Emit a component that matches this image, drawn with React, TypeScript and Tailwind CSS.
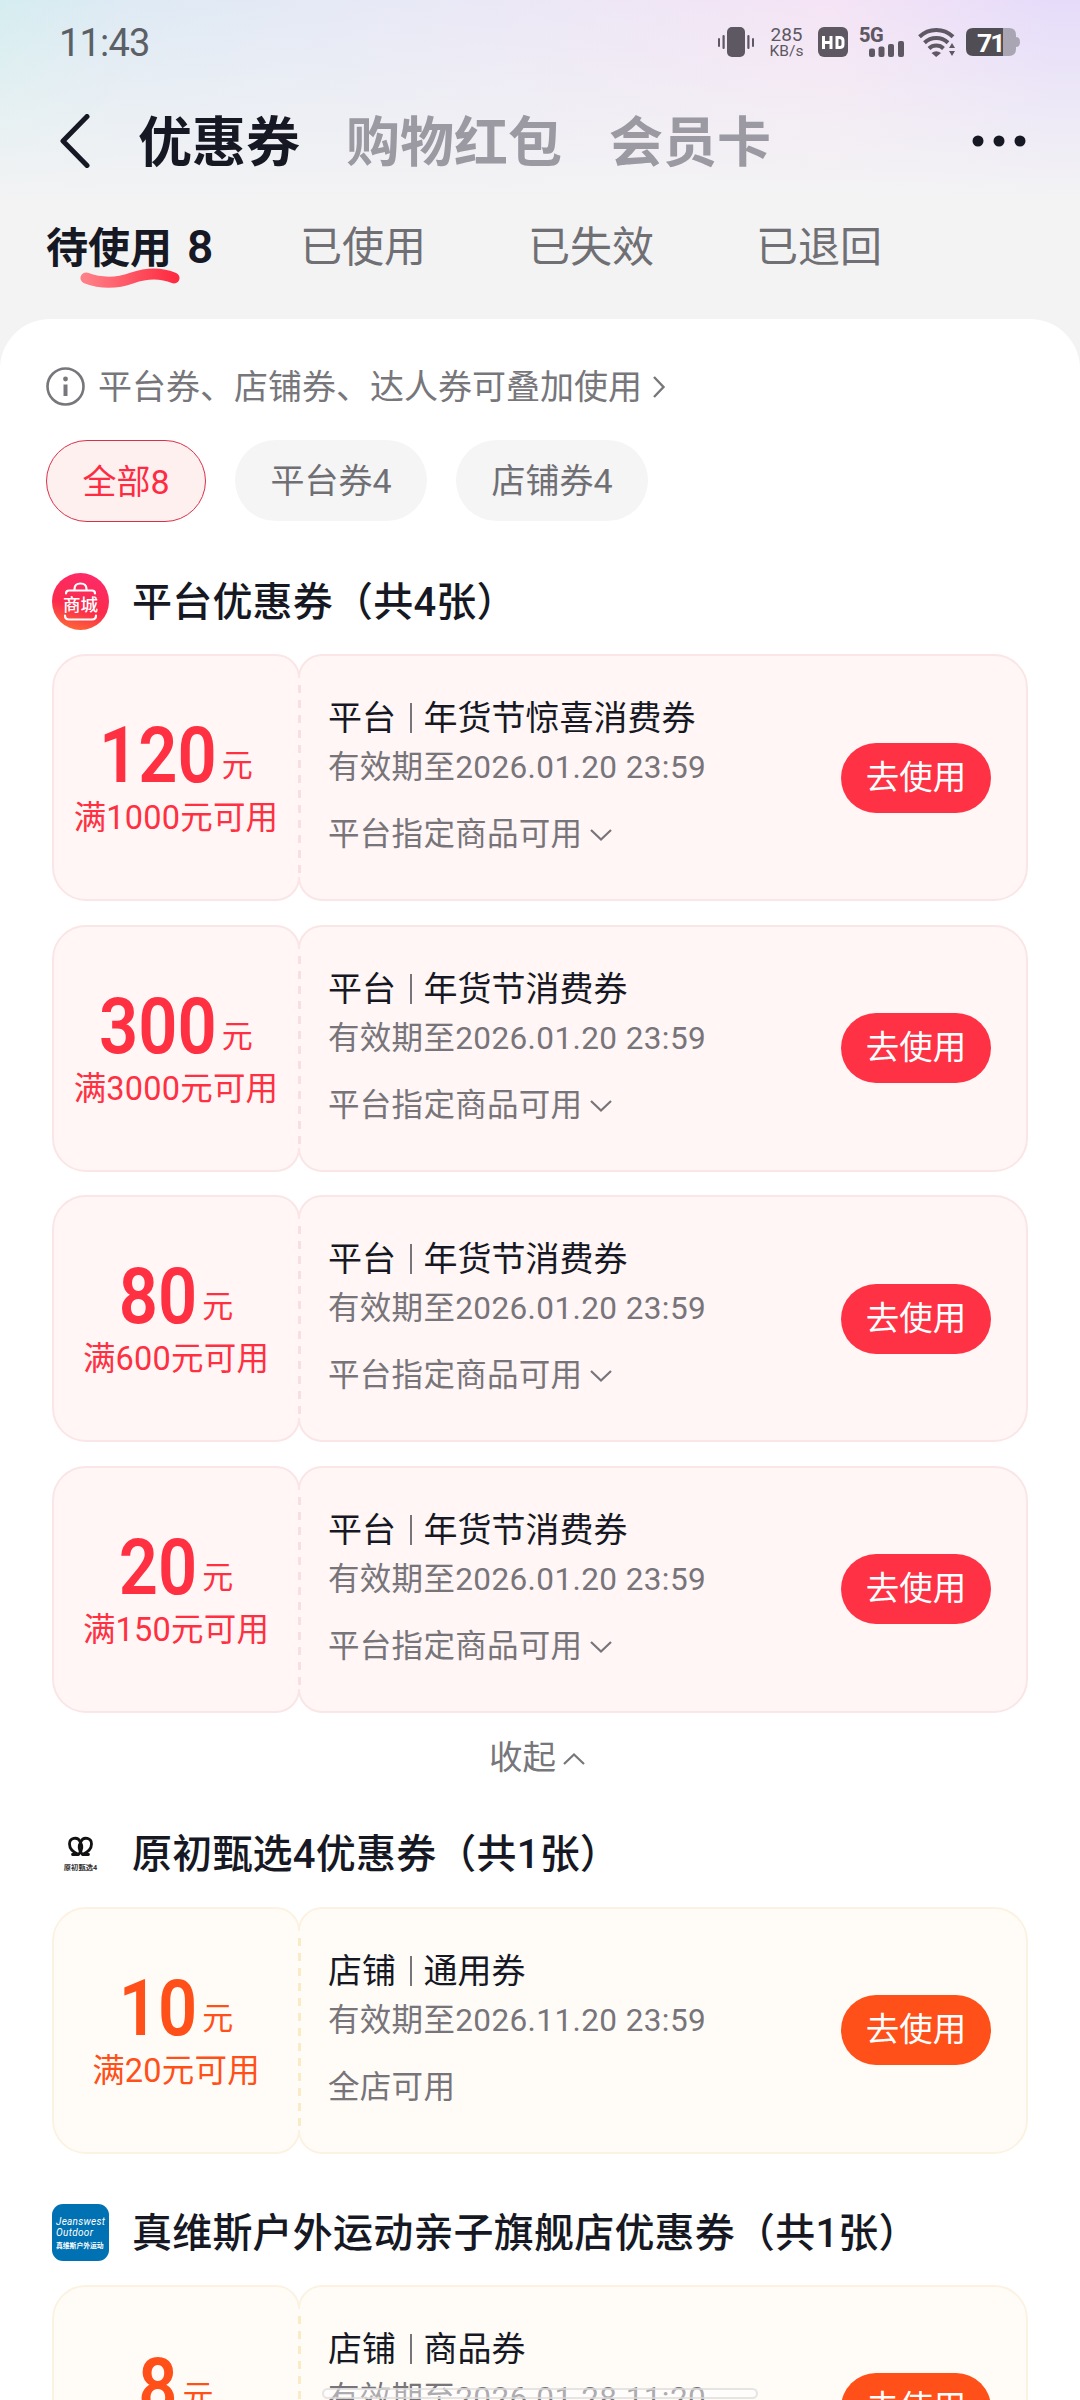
import clsx from "clsx";

type Tone = "red" | "orange";

interface Coupon {
  amount: string;
  condition: string;
  kind: string;
  name: string;
  expires: string;
  scope: string;
  expandable?: boolean;
}

const platformCoupons: Coupon[] = [
  {
    amount: "120",
    condition: "满1000元可用",
    kind: "平台",
    name: "年货节惊喜消费券",
    expires: "2026.01.20 23:59",
    scope: "平台指定商品可用",
    expandable: true,
  },
  {
    amount: "300",
    condition: "满3000元可用",
    kind: "平台",
    name: "年货节消费券",
    expires: "2026.01.20 23:59",
    scope: "平台指定商品可用",
    expandable: true,
  },
  {
    amount: "80",
    condition: "满600元可用",
    kind: "平台",
    name: "年货节消费券",
    expires: "2026.01.20 23:59",
    scope: "平台指定商品可用",
    expandable: true,
  },
  {
    amount: "20",
    condition: "满150元可用",
    kind: "平台",
    name: "年货节消费券",
    expires: "2026.01.20 23:59",
    scope: "平台指定商品可用",
    expandable: true,
  },
];

const shopCoupon: Coupon = {
  amount: "10",
  condition: "满20元可用",
  kind: "店铺",
  name: "通用券",
  expires: "2026.11.20 23:59",
  scope: "全店可用",
};

const goodsCoupon: Coupon = {
  amount: "8",
  condition: "",
  kind: "店铺",
  name: "商品券",
  expires: "2026.01.28 11:20",
  scope: "",
};

function StatusBar() {
  return (
    <div className="flex h-[84px] items-center pl-[59px] pr-[60px] text-[#5d5862]">
      <span className="pt-px text-[38px] leading-[84px] tracking-[-0.8px] text-[#5b6066]">11:43</span>
      <div className="ml-auto flex h-[30px] items-center">
        {/* vibrate */}
        <svg width="36" height="30" viewBox="0 0 36 30" fill="currentColor" className="mr-[15px]">
          <rect x="9" y="0" width="18" height="30" rx="5" />
          <rect x="0" y="11" width="2" height="9" rx="1" />
          <rect x="4.5" y="8" width="2.2" height="14" rx="1" />
          <rect x="29.3" y="8" width="2.2" height="14" rx="1" />
          <rect x="34" y="11" width="2" height="9" rx="1" />
        </svg>
        <div className="mr-[14px] flex w-[35px] flex-col items-center">
          <span className="text-[19px] leading-[17px]">285</span>
          <span className="text-[15.500px] leading-[16px]">KB/s</span>
        </div>
        <svg width="30" height="30" viewBox="0 0 30 30" className="mr-3">
          <rect width="30" height="30" rx="6" fill="currentColor" />
          <path d="M5.500 9v13M13 9v13M5 15.500h8M19 10.500h2.500q3.500 0 3.500 3v4q0 3-3.500 3H19z" fill="none" stroke="#fff" strokeWidth="3" />
        </svg>
        <svg width="45" height="30" viewBox="0 0 45 30" fill="currentColor" className="mr-[13px] overflow-visible">
          <text x="-1" y="14.500" fontSize="20" fontWeight="800" letterSpacing="-0.500">
            5G
          </text>
          <rect x="9" y="21.500" width="6" height="8.500" rx="2" />
          <rect x="18.5" y="19.5" width="6" height="10.5" rx="2" />
          <rect x="28" y="17" width="6" height="13" rx="2" />
          <rect x="38" y="14" width="6" height="16" rx="2" />
        </svg>
        <svg width="38" height="30" viewBox="0 0 38 30" fill="none" stroke="currentColor" strokeWidth="4" className="mr-[10px]">
          <path d="M1.500 9.800a24 24 0 0 1 33.500 0" />
          <path d="M6.500 15.800a17 17 0 0 1 23.500 0" />
          <path d="M11 21.500a10.500 10.500 0 0 1 14.500 0" />
          <path d="M13.500 26q4.800-3.500 9.500 0L18.200 30z" fill="currentColor" stroke="none" />
          <path d="M34 16l3 5h-6zM34 29l3-5h-6z" fill="currentColor" stroke="none" />
        </svg>
        <svg width="54" height="28" viewBox="0 0 54 28" className="overflow-visible">
          <path d="M36 0h7q7 0 7 7v14q0 7-7 7h-7z" fill="#aaa5b2" />
          <path d="M50 9q4 0 4 5t-4 5z" fill="#aaa5b2" />
          <path d="M7 0h30v28H7q-7 0-7-7V7q0-7 7-7z" fill="#514d55" />
          <text x="11" y="23.500" fontSize="26.500" fontWeight="700" fill="#fff" letterSpacing="-2">
            71
          </text>
        </svg>
      </div>
    </div>
  );
}

function NavBar() {
  return (
    <div className="flex h-[114px] items-center pl-[59px] pr-[54px] text-[54px] font-bold leading-[114px] text-[#9b9aa2]">
      <svg width="31" height="54" viewBox="0 0 31 54" fill="none" stroke="#161823" strokeWidth="5" strokeLinecap="round" strokeLinejoin="round">
        <path d="M28 2.500L4 27l24 24.500" />
      </svg>
      <span className="ml-[48px] pt-[5px] text-[#161823]">优惠券</span>
      <span className="ml-[46px] pt-[5px]">购物红包</span>
      <span className="ml-[47px] pt-[5px]">会员卡</span>
      <svg width="54" height="12" viewBox="0 0 54 12" fill="#161823" className="ml-auto">
        <circle cx="6" cy="6" r="5.500" />
        <circle cx="27" cy="6" r="5.500" />
        <circle cx="48" cy="6" r="5.500" />
      </svg>
    </div>
  );
}

function StateTabs() {
  return (
    <div className="flex h-[121px] pl-[46px] text-[42px] leading-[99px] text-[#6f6f74]">
      <div className="relative w-[254px] font-bold text-[#161823]">
        待使用<span className="ml-[15px] text-[46px] font-semibold">8</span>
        <svg width="100" height="22" viewBox="0 0 100 22" className="absolute left-[34px] top-[69px]">
          <defs>
            <linearGradient id="wave" x1="0" x2="1">
              <stop offset="0" stopColor="#ff7f86" />
              <stop offset="1" stopColor="#fe2c42" />
            </linearGradient>
          </defs>
          <path d="M6 11C22 17 38 16 52 11S80 5 94 11" fill="none" stroke="url(#wave)" strokeWidth="11" strokeLinecap="round" />
        </svg>
      </div>
      <span className="w-[228px]">已使用</span>
      <span className="w-[228px]">已失效</span>
      <span>已退回</span>
    </div>
  );
}

function Filters() {
  return (
    <div className="mt-[33px] flex h-[82px] gap-[29px] pl-[46px] text-[34px] leading-[83px] text-[#6f6f74]">
      <span className="h-[82px] w-[160px] rounded-full border-[1.5px] border-[#d9304a] bg-[#fff0f0] text-center leading-[82px] text-[#fe2c42]">全部8</span>
      <span className="h-[81px] w-[192px] rounded-full bg-[#f5f5f6] text-center">平台券4</span>
      <span className="h-[81px] w-[192px] rounded-full bg-[#f5f5f6] text-center">店铺券4</span>
    </div>
  );
}

function MallIcon() {
  return (
    <svg width="57" height="57" viewBox="0 0 57 57">
      <defs>
        <linearGradient id="mall" x1="0.6" y1="0" x2="0.3" y2="1">
          <stop offset="0" stopColor="#fe2a68" />
          <stop offset="0.6" stopColor="#fb2b4c" />
          <stop offset="1" stopColor="#fd6a35" />
        </linearGradient>
      </defs>
      <circle cx="28.500" cy="28.500" r="28.500" fill="url(#mall)" />
      <g fill="none" stroke="#fff" strokeWidth="2.200" strokeLinecap="round">
        <path d="M14 20.500q0-3 3-3h23q3 0 3 3" />
        <path d="M22.500 17v-1q0-5.500 6-5.500t6 5.500v1" />
        <path d="M13 42.500q0 4 4 4h23q4 0 4-4" />
      </g>
      <text x="28.500" y="38" fontSize="17.500" fontWeight="500" fill="#fff" textAnchor="middle">
        商城
      </text>
    </svg>
  );
}

function YuanchuIcon() {
  return (
    <svg width="57" height="57" viewBox="0 0 57 57">
      <g fill="none" stroke="#111" strokeWidth="2.800" strokeLinecap="round" strokeLinejoin="round">
        <path d="M20.500 29.500h6c-3.500-1.500-9-5-9-10.500a5.500 5.500 0 0 1 10.500-2.500c3 5 2.500 9-1.500 13" />
        <path d="M36.500 29.500h-6c3.500-1.500 9-5 9-10.500a5.500 5.500 0 0 0-10.500-2.500c-3 5-2.500 9 1.500 13" />
      </g>
      <text x="28.500" y="45" fontSize="7.300" fontWeight="700" fill="#333" textAnchor="middle">
        原初甄选4
      </text>
    </svg>
  );
}

function JeanswestIcon() {
  return (
    <svg width="57" height="57" viewBox="0 0 57 57">
      <rect width="57" height="57" rx="11" fill="#0071b3" />
      <g fill="#fff" fontStyle="italic" fontSize="10">
        <text x="4" y="21" textLength="49">
          Jeanswest
        </text>
        <text x="4" y="32" textLength="37">
          Outdoor
        </text>
      </g>
      <text x="4" y="43.500" fontSize="6.800" fontWeight="700" fill="#fff">
        真维斯户外运动
      </text>
    </svg>
  );
}

function SectionTitle({ icon, children }: { icon: React.ReactNode; children: React.ReactNode }) {
  return (
    <div className="flex h-[57px] items-center gap-[23px] pl-[52px]">
      {icon}
      <h2 className="pt-[2px] text-[40px] font-medium leading-[57px] tracking-[0.2px] text-[#161823]">{children}</h2>
    </div>
  );
}

function CouponCard({ coupon, tone }: { coupon: Coupon; tone: Tone }) {
  const red = tone === "red";
  const shell = red ? "border-[#fae6e7] bg-[#fff6f5]" : "border-[#fcf2e2] bg-[#fffcf8]";
  return (
    <div className="mx-[52px] flex h-[247px] shrink-0">
      <div
        className={clsx(
          "flex w-[248px] flex-col items-center rounded-l-[34px] rounded-r-[24px] border-2 pt-[60px]",
          shell,
          red ? "text-[#fe3042]" : "text-[#ff5019]"
        )}
      >
        <div className="flex h-[80px] items-start">
          {/* digits are drawn narrower than their box, the margin takes the slack back */}
          <span
            className="origin-right scale-x-[0.88] text-[78px] font-semibold leading-[80px]"
            style={{ marginLeft: coupon.amount.length * -5.4 }}
          >
            {coupon.amount}
          </span>
          <span className="ml-[5px] mt-[30px] text-[31px] leading-[40px]">元</span>
        </div>
        <span className="text-[32.500px] leading-[44px] tracking-[0.2px]">{coupon.condition}</span>
      </div>
      {/* perforation between the two halves */}
      <div className="relative z-10 w-0">
        <div className={clsx("absolute -left-[3px] top-[24px] flex h-[199px] w-[4px] justify-center", red ? "bg-[#fff6f5]" : "bg-[#fffcf8]")}>
          <div
            className={clsx(
              "w-[3px] bg-[length:3px_15px]",
              red
                ? "bg-[linear-gradient(to_bottom,transparent_7px,#f9dfe1_7px)]"
                : "bg-[linear-gradient(to_bottom,transparent_7px,#fbeac6_7px)]"
            )}
          />
        </div>
      </div>
      <div className={clsx("-ml-[2px] flex flex-1 items-center rounded-l-[24px] rounded-r-[34px] border-2 pl-[28px] pr-[35px]", shell)}>
        <div className="h-full flex-1 pt-[41px] text-[31.500px] tracking-[0.300px] text-[#77747a]">
          <div className="flex items-center text-[34px] leading-[42px] tracking-normal text-[#161823]">
            {coupon.kind}
            <span className="ml-[14px] mr-[12px] h-[30px] w-[1.500px] bg-[#77757c]" />
            {coupon.name}
          </div>
          <div className="mt-[8px] leading-[42px]">
            有效期至<span className="tracking-[0.400px]">{coupon.expires}</span>
          </div>
          <div className="mt-[25px] flex items-center leading-[42px]">
            {coupon.scope}
            {coupon.expandable && (
              <svg width="22" height="14" viewBox="0 0 22 14" fill="none" stroke="currentColor" strokeWidth="2.200" className="ml-2">
                <path d="M1 2l10 9.500L21 2" />
              </svg>
            )}
          </div>
        </div>
        <button className={clsx("h-[70px] w-[150px] rounded-full text-[33.500px] leading-[70px] text-white", red ? "bg-[#fe3244]" : "bg-[#ff5019]")}>
          去使用
        </button>
      </div>
    </div>
  );
}

export default function App() {
  return (
    <div
      lang="zh-CN"
      className="relative h-[2400px] w-[1080px] overflow-hidden whitespace-nowrap bg-[#f3f3f4] bg-[linear-gradient(to_bottom,rgba(243,243,244,0)_0px,rgba(243,243,244,1)_200px),linear-gradient(to_right,#d5edf0_0px,#deeaf4_120px,#e8e9f6_400px,#f5e4f5_830px,#e6dcfa_1050px)] bg-no-repeat font-[Roboto,'Noto_Sans_CJK_SC',sans-serif]"
    >
      <StatusBar />
      <NavBar />
      <StateTabs />
      <main className="flex h-[2081px] flex-col rounded-t-[50px] bg-white pt-[47px]">
        <div className="flex h-[41px] items-center pl-[46px] text-[34px] leading-[41px] text-[#77767b]">
          <svg width="39" height="39" viewBox="0 0 39 39" fill="none" stroke="currentColor" strokeWidth="2.600">
            <circle cx="19.500" cy="19.500" r="18" />
            <path d="M19.500 17.500v11.500" strokeWidth="4" />
            <circle cx="19.500" cy="12" r="2.400" fill="currentColor" stroke="none" />
          </svg>
          <span className="ml-[13px] pt-px">平台券、店铺券、达人券可叠加使用</span>
          <svg width="14" height="24" viewBox="0 0 14 24" fill="none" stroke="currentColor" strokeWidth="2.400" className="ml-[10px]">
            <path d="M2 2l9.500 10L2 22" />
          </svg>
        </div>
        <Filters />
        <div className="mt-[51px]">
          <SectionTitle icon={<MallIcon />}>平台优惠券（共4张）</SectionTitle>
        </div>
        <div className="mt-[24px] flex flex-col gap-[23.600px]">
          {platformCoupons.map((coupon, i) => (
            <CouponCard key={i} coupon={coupon} tone="red" />
          ))}
        </div>
        <div className="mt-[24px] flex h-[42px] items-center justify-center text-[33.500px] leading-[42px] text-[#77767b]">
          收起
          <svg width="22" height="14" viewBox="0 0 22 14" fill="none" stroke="currentColor" strokeWidth="2.200" className="ml-[7px] mr-[6px] mt-[2px]">
            <path d="M1 12l10-9.500L21 12" />
          </svg>
        </div>
        <div className="mt-[46px]">
          <SectionTitle icon={<YuanchuIcon />}>原初甄选4优惠券（共1张）</SectionTitle>
        </div>
        <div className="mt-[25px]">
          <CouponCard coupon={shopCoupon} tone="orange" />
        </div>
        <div className="mt-[50px]">
          <SectionTitle icon={<JeanswestIcon />}>真维斯户外运动亲子旗舰店优惠券（共1张）</SectionTitle>
        </div>
        <div className="mt-[24px]">
          <CouponCard coupon={goodsCoupon} tone="orange" />
        </div>
      </main>
      {/* home indicator */}
      <div className="absolute bottom-[1px] left-[322px] z-20 h-[11px] w-[436px] rounded-full border-2 border-[#dcdad8]/70 bg-white/40" />
    </div>
  );
}
